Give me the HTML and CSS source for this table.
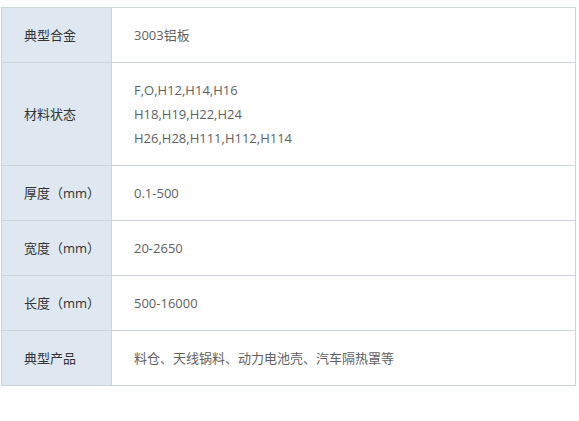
FILE: index.html
```html
<!DOCTYPE html>
<html lang="zh-CN">
<head>
  <meta charset="UTF-8" />
  <title>3003铝板</title>
  <link rel="stylesheet" href="styles.css">
</head>
<body>
  <div class="spec-wrap">
    <table class="spec-table">
      <tr>
        <th>典型合金</th>
        <td>3003铝板</td>
      </tr>
      <tr>
        <th>材料状态</th>
        <td>F,O,H12,H14,H16<br>H18,H19,H22,H24<br>H26,H28,H111,H112,H114</td>
      </tr>
      <tr>
        <th>厚度（mm）</th>
        <td>0.1-500</td>
      </tr>
      <tr>
        <th>宽度（mm）</th>
        <td>20-2650</td>
      </tr>
      <tr>
        <th>长度（mm）</th>
        <td>500-16000</td>
      </tr>
      <tr>
        <th>典型产品</th>
        <td>料仓、天线锅料、动力电池壳、汽车隔热罩等</td>
      </tr>
    </table>
  </div>
</body>
</html>
```
FILE: styles.css
```css
:root {
  --head-bg: #dfe8f1;
  --line: #c8d5e0;
  --label: #333333;
  --value: #5f5f5f;
}

* {
  box-sizing: border-box;
  margin: 0;
  padding: 0;
}

body {
  font-family: 'Open Sans', 'Noto Sans CJK SC', sans-serif;
  font-size: 13px;
  background: #ffffff;
}

.spec-wrap {
  padding: 7px 0 0 1px;
}

.spec-table {
  width: 575px;
  border-collapse: collapse;
  line-height: 24px;
  table-layout: fixed;
}

.spec-table th,
.spec-table td {
  border: 1px solid var(--line);
  padding: 15px 22px;
  text-align: left;
  vertical-align: middle;
  font-weight: normal;
}

.spec-table th {
  width: 110px;
  padding-right: 6px;
  background: var(--head-bg);
  color: var(--label);
  white-space: nowrap;
}

.spec-table td {
  color: var(--value);
}
```
